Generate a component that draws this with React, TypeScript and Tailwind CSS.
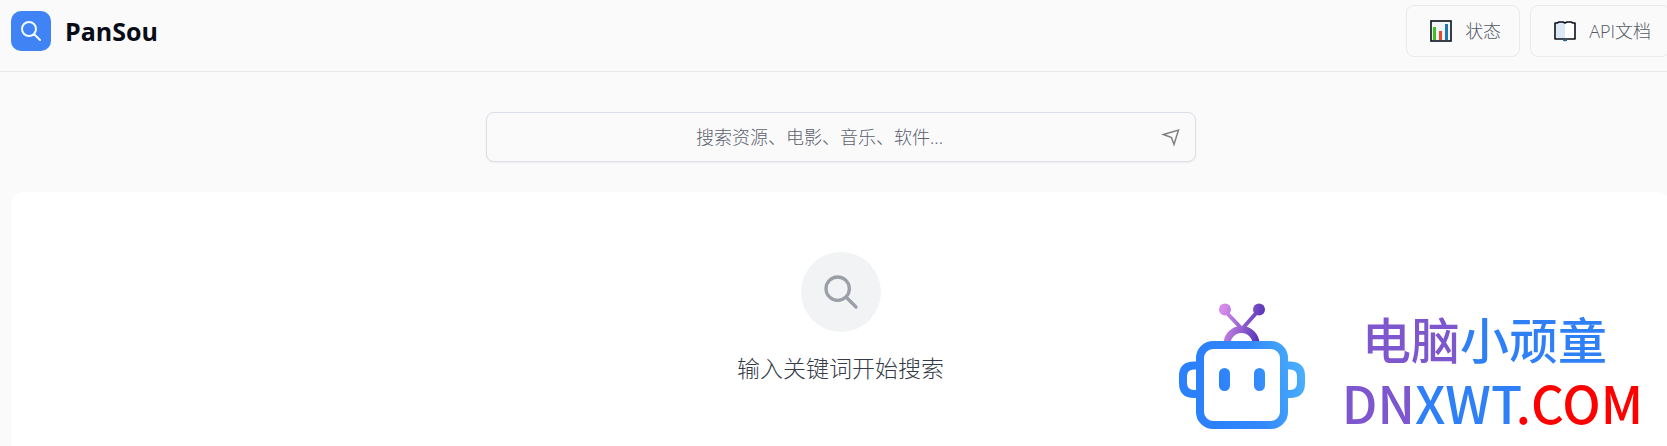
import React from "react";

const SearchIcon = ({ className }: { className?: string }) => (
  <svg
    className={className}
    viewBox="0 0 24 24"
    fill="none"
    stroke="currentColor"
    strokeWidth={2}
    strokeLinecap="round"
    strokeLinejoin="round"
    aria-hidden="true"
  >
    <path d="M21 21l-6-6m2-5a7 7 0 11-14 0 7 7 0 0114 0z" />
  </svg>
);

const ChartIcon = () => (
  <svg className="size-6" viewBox="0 0 24 24" aria-hidden="true">
    <rect x="2" y="2" width="20" height="20" fill="#f3f5f6" stroke="#0b0f19" strokeWidth="1.6" />
    <rect x="4" y="8" width="3" height="13" fill="#3fc01e" />
    <rect x="10" y="12" width="3" height="9" fill="#e8492f" />
    <rect x="16" y="5" width="3" height="16" fill="#1f78b4" />
  </svg>
);

const BookIcon = () => (
  <svg className="size-6" viewBox="0 0 24 24" aria-hidden="true">
    <path d="M2 4h2l2-1h4l2 1 2-1h4l2 1h2v16H2z" fill="#fff" />
    <path d="M3 4l3-1h4l2 1v16H3z" fill="#dde8f6" />
    <path
      d="M2 4h2l2-1h4l2 1 2-1h4l2 1h2v16H2z"
      fill="none"
      stroke="#0b0f19"
      strokeWidth="1.6"
      strokeLinejoin="round"
    />
    <path d="M10 21h4l-2 1z" fill="#1f5f9e" stroke="#1f5f9e" />
  </svg>
);

const SendIcon = () => (
  <svg
    className="size-5"
    viewBox="0 0 20 20"
    fill="none"
    stroke="currentColor"
    strokeWidth="1.5"
    aria-hidden="true"
  >
    <path d="M2.500 7.500L17.500 3L13 17.500L10.500 10.500z" />
  </svg>
);

const RobotLogo = () => (
  <svg className="mb-1.5 h-32 w-32" viewBox="0 0 128 128" fill="none" aria-hidden="true">
    <defs>
      <linearGradient id="body" gradientUnits="userSpaceOnUse" x1="20" y1="60" x2="126" y2="40">
        <stop offset="0" stopColor="#2b80fb" />
        <stop offset="0.5" stopColor="#3389fb" />
        <stop offset="1" stopColor="#4cb4fc" />
      </linearGradient>
      <linearGradient id="antenna" gradientUnits="userSpaceOnUse" x1="42" y1="20" x2="84" y2="30">
        <stop offset="0" stopColor="#d48be9" />
        <stop offset="0.5" stopColor="#9560d0" />
        <stop offset="1" stopColor="#5030b4" />
      </linearGradient>
    </defs>
    <g stroke="url(#antenna)" strokeWidth="4">
      <path d="M47 8L64 26M80 8L64 26" />
      <path d="M49 41A14.5 14.5 0 0 1 78 41" strokeWidth="7" />
    </g>
    <g fill="url(#antenna)">
      <circle cx="47" cy="6.500" r="6" />
      <circle cx="81" cy="6.500" r="6" />
    </g>
    <g stroke="url(#body)" strokeWidth="8">
      <path d="M22 62.500H16Q5 62.500 5 73V80Q5 91 16 91H22" />
      <path d="M106 62.500H112Q123 62.500 123 73V80Q123 91 112 91H106" />
      <rect x="22" y="42" width="84" height="80" rx="13" />
    </g>
    <g fill="url(#body)">
      <rect x="41" y="65" width="11" height="23" rx="5.500" />
      <rect x="76" y="65" width="11" height="23" rx="5.500" />
    </g>
  </svg>
);

const navItems = [
  { label: "状态", icon: <ChartIcon /> },
  { label: "API文档", icon: <BookIcon /> },
];

const App = () => {
  return (
    <div className="overflow-hidden bg-[#fafafa] font-['Open_Sans','Noto_Sans_CJK_SC',sans-serif]">
      <div className="relative -mr-[14px] flex min-h-screen flex-col">
        <header className="flex items-center justify-between border-b border-[#e5e7eb] px-[11px] pt-[5px] pb-[14px]">
          <div className="flex items-center gap-[14px]">
            <div className="flex size-10 items-center justify-center rounded-[10px] bg-[#3f83f5]">
              <SearchIcon className="size-6 text-[#f2fcff]" />
            </div>
            <h1 className="text-[25px] leading-8 font-bold text-[#080c18]">PanSou</h1>
          </div>
          <nav className="flex gap-[10px]">
            {navItems.map((item) => (
              <button
                key={item.label}
                type="button"
                className="flex h-[52px] items-center gap-3 rounded-lg border border-[#e8eaed] pr-[18px] pl-[22px] text-[18px] font-light text-[#555b66]"
              >
                {item.icon}
                {item.label}
              </button>
            ))}
          </nav>
        </header>

        <form className="mx-auto mt-10 flex h-[50px] w-full max-w-[710px] items-center rounded-lg border border-[#dadfe8] bg-[#fafafb] pr-[14px] pl-4 shadow-xs">
          <input
            type="text"
            aria-label="搜索"
            placeholder="搜索资源、电影、音乐、软件..."
            className="min-w-0 flex-1 bg-transparent pr-6 text-center text-[18px] font-light text-gray-900 outline-none placeholder:text-[#5a616e]"
          />
          <button type="submit" aria-label="开始搜索" className="text-[#808080]">
            <SendIcon />
          </button>
        </form>

        <main className="mx-[11px] mt-[30px] flex flex-1 flex-col items-center rounded-t-xl bg-white pt-[60px] shadow-xs">
          <div className="flex size-20 items-center justify-center rounded-full bg-[#f2f3f5]">
            <SearchIcon className="size-10 text-[#9b9fa8]" />
          </div>
          <p className="mt-[18px] text-[23px] leading-9 font-light text-[#343c49]">输入关键词开始搜索</p>
        </main>

        <div className="absolute right-[38px] bottom-[9px] flex items-center gap-9">
          <RobotLogo />
          <div className="flex flex-col items-center font-['Noto_Sans_CJK_SC',sans-serif] font-medium">
            <p className="pr-4 text-[49px] leading-[65px] text-[#2f80f7]">
              <span className="text-[#7e57cf]">电脑</span>小顽童
            </p>
            <p className="text-[51px] leading-[65px] text-[#2f80f7]">
              <span className="text-[#7e57cf]">DN</span>XWT<span className="text-[#fe0000]">.COM</span>
            </p>
          </div>
        </div>
      </div>
    </div>
  );
};

export default App;
